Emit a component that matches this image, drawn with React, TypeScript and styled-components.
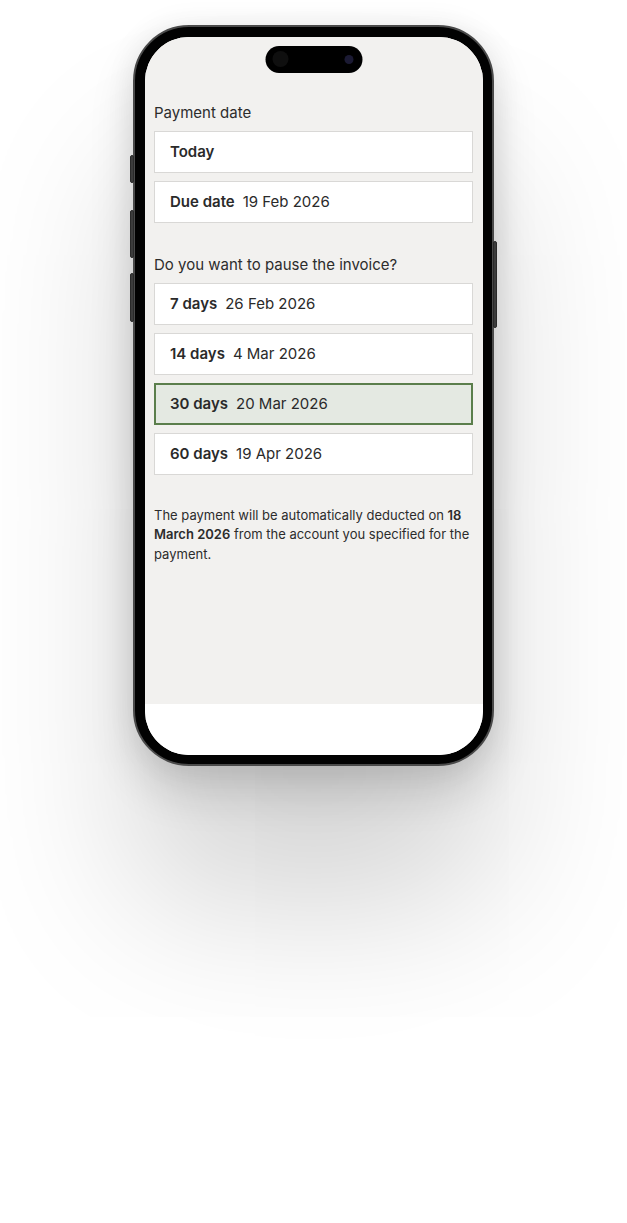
import React from "react";
import styled, { createGlobalStyle } from "styled-components";

const Global = createGlobalStyle`
  html, body { margin: 0; padding: 0; background: #ffffff; }
  body { font-family: Inter, "Noto Sans", "Liberation Sans", sans-serif; }
  * { box-sizing: border-box; }
`;

const Page = styled.div`
  width: 627px;
  height: 1223px;
  display: flex;
  justify-content: center;
  padding-top: 25px;
  background: #ffffff;
  overflow: hidden;
`;

const Phone = styled.div`
  position: relative;
  width: 361px;
  height: 741px;
  border-radius: 56px;
  background: #020202;
  border: 2px solid #4a4a4a;
  padding: 9.5px 9px 9.5px 10px;
  box-shadow:
    0 25px 45px rgba(0, 0, 0, 0.14),
    0 140px 160px rgba(0, 0, 0, 0.17),
    0 0 30px rgba(0, 0, 0, 0.07);
`;

const SideButton = styled.div<{ $side: "left" | "right"; $top: number; $h: number }>`
  position: absolute;
  ${(p) => (p.$side === "left" ? "left: -5px;" : "right: -5px;")}
  top: ${(p) => p.$top}px;
  width: 4px;
  height: ${(p) => p.$h}px;
  background: #3c3c3c;
  border-radius: 2px;
  border: 1px solid #2a2a2a;
`;

const Screen = styled.div`
  position: relative;
  width: 100%;
  height: 100%;
  border-radius: 44px;
  overflow: hidden;
  background: #ffffff;
  display: flex;
  flex-direction: column;
`;

const Island = styled.div`
  position: absolute;
  top: 9px;
  left: 50%;
  transform: translateX(-50%);
  width: 97px;
  height: 27px;
  border-radius: 14px;
  background: #000000;
  display: flex;
  align-items: center;
  justify-content: space-between;
  padding: 0 9px 0 7px;
`;

const Lens = styled.div<{ $size: number; $color: string }>`
  width: ${(p) => p.$size}px;
  height: ${(p) => p.$size}px;
  border-radius: 50%;
  background: ${(p) => p.$color};
`;

const Content = styled.div`
  height: 667px;
  background: #f2f1ef;
  padding: 66px 10px 0 9px;
  display: flex;
  flex-direction: column;
  color: #2a2a2a;
`;

const Label = styled.div<{ $mt?: number }>`
  font-size: 15px;
  line-height: 20px;
  margin-top: ${(p) => p.$mt ?? 0}px;
  margin-bottom: 8px;
  color: #2c2c2c;
`;

const Options = styled.div`
  display: flex;
  flex-direction: column;
  gap: 8px;
`;

const Option = styled.div<{ $selected?: boolean }>`
  height: 42px;
  display: flex;
  align-items: center;
  gap: 8px;
  padding-left: ${(p) => (p.$selected ? 14 : 15)}px;
  background: ${(p) => (p.$selected ? "#e4e9e2" : "#ffffff")};
  border: ${(p) => (p.$selected ? "2px solid #5b7e4c" : "1px solid #d9d8d6")};
  font-size: 15px;
  color: #2a2a2a;
`;

const Strong = styled.span`
  font-weight: 600;
`;

const Note = styled.p`
  margin: 31px 0 0;
  font-size: 13px;
  line-height: 19.5px;
  color: #2c2c2c;
`;

const Bottom = styled.div`
  flex: 1;
  background: #ffffff;
`;

const pauseOptions = [
  { days: "7 days", date: "26 Feb 2026" },
  { days: "14 days", date: "4 Mar 2026" },
  { days: "30 days", date: "20 Mar 2026", selected: true },
  { days: "60 days", date: "19 Apr 2026" },
];

export default function App() {
  return (
    <Page>
      <Global />
      <Phone>
        <SideButton $side="left" $top={128} $h={28} />
        <SideButton $side="left" $top={183} $h={48} />
        <SideButton $side="left" $top={246} $h={49} />
        <SideButton $side="right" $top={214} $h={87} />
        <Screen>
          <Content>
            <Label>Payment date</Label>
            <Options>
              <Option>
                <Strong>Today</Strong>
              </Option>
              <Option>
                <Strong>Due date</Strong>
                <span>19 Feb 2026</span>
              </Option>
            </Options>
            <Label $mt={32}>Do you want to pause the invoice?</Label>
            <Options>
              {pauseOptions.map((o) => (
                <Option key={o.days} $selected={o.selected}>
                  <Strong>{o.days}</Strong>
                  <span>{o.date}</span>
                </Option>
              ))}
            </Options>
            <Note>
              The payment will be automatically deducted on <Strong>18</Strong>
              <br />
              <Strong>March 2026</Strong> from the account you specified for the payment.
            </Note>
          </Content>
          <Bottom />
          <Island>
            <Lens $size={16} $color="#0f0f0f" />
            <Lens $size={9} $color="#1b1a33" />
          </Island>
        </Screen>
      </Phone>
    </Page>
  );
}
